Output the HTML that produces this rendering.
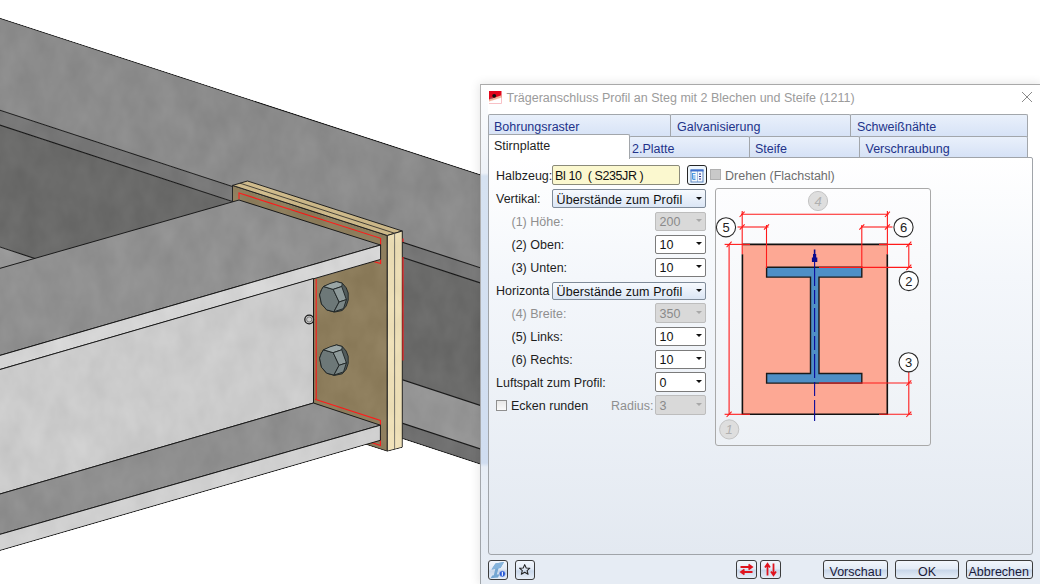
<!DOCTYPE html>
<html><head><meta charset="utf-8">
<style>
html,body{margin:0;padding:0;width:1040px;height:584px;overflow:hidden;background:#fff;}
body{position:relative;font-family:"Liberation Sans",sans-serif;font-size:12px;color:#1e1e1e;}
.a{position:absolute;}
#scene{position:absolute;left:0;top:0;}
#dlg{position:absolute;left:480px;top:84px;width:560px;height:500px;background:linear-gradient(#fff 0px,#fff 70px,#e6ecf4 470px);border-left:1px solid rgba(0,0,0,0.3);border-top:1px solid #a9a9a9;box-sizing:border-box;box-shadow:0 0 9px 1px rgba(0,0,0,0.10);}
#ttl{position:absolute;left:0;top:0;width:560px;height:29px;background:#fff;}
.t{white-space:nowrap;line-height:14px;}
.tab{position:absolute;box-sizing:border-box;border:1px solid #a2a6ab;border-bottom:none;border-radius:2px 2px 0 0;background:linear-gradient(#e9f0fb,#d6e2f6);color:#22338a;font-size:12.5px;line-height:14px;white-space:nowrap;}
.tab span{position:absolute;top:4.5px;}
.lbl{position:absolute;white-space:nowrap;font-size:12.5px;line-height:14px;color:#1e1e1e;}
.dis{color:#8f8f8f;}
.cb{position:absolute;box-sizing:border-box;border:1px solid #7b7b7b;border-radius:2px;background:#fff;font-size:12.5px;line-height:14px;white-space:nowrap;color:#111;}
.cb span{position:absolute;left:3.5px;top:2.5px;}
.cb i{position:absolute;right:3.5px;top:6.5px;width:0;height:0;border-left:3.5px solid transparent;border-right:3.5px solid transparent;border-top:3.5px solid #111;}
.cb.dd{background:#d9d9d9;border-color:#bdbdbd;color:#8a8a8a;}
.cb.dd i{border-top-color:#a8a8a8;}
.cb.gr{background:linear-gradient(#f7fafe,#dbe6f5);border-color:#7f8b99;}
.btn{position:absolute;box-sizing:border-box;border:1px solid #3c3c3c;border-radius:3px;background:linear-gradient(#f2f6fc 0%,#e3ebf6 45%,#c9d7ea 55%,#e6eef8 100%);font-size:12.5px;line-height:14px;white-space:nowrap;color:#1a1a3a;text-align:center;overflow:hidden;}

</style></head><body>
<svg id="scene" width="481" height="584" viewBox="0 0 481 584">
<defs>
  <filter id="tex" x="-20" y="0" width="520" height="584" filterUnits="userSpaceOnUse" color-interpolation-filters="sRGB">
    <feTurbulence type="fractalNoise" baseFrequency="0.045 0.03" numOctaves="3" seed="7" result="n"/>
    <feColorMatrix in="n" type="matrix" values="1 0 0 0 0  1 0 0 0 0  1 0 0 0 0  0 0 0 0 1" result="g"/>
    <feComposite in="SourceGraphic" in2="g" operator="arithmetic" k1="0" k2="1" k3="0.07" k4="-0.035" result="c"/>
    <feComposite in="c" in2="SourceAlpha" operator="in"/>
  </filter>
</defs>
<g filter="url(#tex)">
  <!-- main beam top flange top surface -->
  <polygon points="-10,15 481,175.1 481,268 -10,107" fill="#8b8b8b"/>
  <!-- main top flange front face -->
  <polygon points="-10,107 481,268 481,283.2 -10,121.9" fill="#777777"/>
  <!-- main web -->
  <polygon points="-10,121.9 481,283.2 481,405.7 -10,243.7" fill="#6a6a69"/>
  <!-- main bottom flange top surface -->
  <polygon points="-10,243.7 481,405.7 481,449.2 -10,287.2" fill="#969696"/>
  <!-- main bottom flange front face -->
  <polygon points="-10,287.2 481,449.2 481,464.3 -10,302.7" fill="#707070"/>
  <g stroke="#1a1a1a" stroke-width="1.1" fill="none">
    <line x1="-10" y1="15" x2="481" y2="175.1"/>
    <line x1="-10" y1="107" x2="481" y2="268"/>
    <line x1="-10" y1="121.9" x2="481" y2="283.2"/>
    <line x1="-10" y1="243.7" x2="481" y2="405.7"/>
    <line x1="-10" y1="287.2" x2="481" y2="449.2"/>
    <line x1="-10" y1="302.7" x2="481" y2="464.3"/>
  </g>
  <!-- end plate front face -->
  <polygon points="232.5,185.4 387.3,235.5 387.3,451.2 232.5,401" fill="#8d7d5c" stroke="#222" stroke-width="1"/>
  <!-- plate top strips -->
  <polygon points="232.5,185.4 247.5,181 402.3,231 387.3,235.5" fill="#cdb98a" stroke="#222" stroke-width="1"/>
  <line x1="240" y1="183.2" x2="394.8" y2="233.3" stroke="#222" stroke-width="0.8"/>
  <!-- plate side strips -->
  <polygon points="387.3,235.5 402.3,231 402.3,447.3 387.3,451.2" fill="#ecdeb6" stroke="#222" stroke-width="1"/>
  <line x1="394.6" y1="233.3" x2="394.6" y2="449.3" stroke="#555" stroke-width="0.8"/>
  <!-- red outlines on plate -->
  <g stroke="#ff1a1a" stroke-width="1.1" fill="none">
    <polyline points="239,199 239,193 380.6,238.3 380.6,245"/>
    <polyline points="380.6,259 380.6,263.5 372,261"/>
    <line x1="316.2" y1="279" x2="316.2" y2="399.5"/>
    <polyline points="315,399.2 380.4,420.4 380.4,425"/>
    <polyline points="380.4,436 380.4,445.4 367,441"/>
    <line x1="403" y1="238.5" x2="403" y2="242"/>
    <line x1="403" y1="257" x2="403" y2="360.6"/>
  </g>
  <!-- secondary top flange top surface -->
  <polygon points="239,200 380.6,245 -10,358.3 -10,271.2" fill="#909090" stroke="#1a1a1a" stroke-width="1"/>
  <!-- secondary top flange front face -->
  <polygon points="380.6,245 380.6,259.4 -10,372.4 -10,358.3" fill="#d5d5d5" stroke="#1a1a1a" stroke-width="1"/>
  <!-- secondary web -->
  <polygon points="-10,372.4 313.5,278.5 313.5,403 -10,496.9" fill="#cbcbcb" stroke="#1a1a1a" stroke-width="1"/>
  <!-- secondary bottom flange top surface -->
  <polygon points="313.5,403 380.4,425.2 -10,537.2 -10,496.9" fill="#8f8f8f" stroke="#1a1a1a" stroke-width="1"/>
  <!-- secondary bottom flange front face -->
  <polygon points="380.4,425.2 380.4,440.3 -10,553.4 -10,537.2" fill="#d0d0d0" stroke="#1a1a1a" stroke-width="1"/>
  </g>
  <!-- bolts -->
  <g id="bolt" stroke="#1e2424" stroke-width="0.9" stroke-linejoin="round">
    <polygon points="323.5,286.5 336.5,281.6 342.3,283.2 346.2,287.8 348.2,293 348.2,300.1 346.2,306 342.3,310.5 334.5,312.1 326.7,309.9 321.5,304 319.6,294.9 321.5,289.7" fill="#525c5c"/>
    <polygon points="323.5,286.5 333.2,289.4 339.1,302 333.9,311.8 326.7,309.9 321.5,304 319.6,294.9 321.5,289.7" fill="#6d7878"/>
    <polygon points="323.5,286.5 330,283.5 336.5,281.6 342.3,283.2 341.7,286.5 333.2,289.4" fill="#9aa6a6"/>
    <polygon points="333.2,289.4 341.7,286.5 346.4,299.6 339.1,302" fill="#8e9a9a"/>
    <polygon points="339.1,302 346.4,299.6 343.5,308.6 333.9,311.8" fill="#7a8686"/>
  </g>
  <use href="#bolt" transform="translate(0,63.3)"/>
  <circle cx="309.2" cy="319.5" r="4.4" fill="none" stroke="#1a1a1a" stroke-width="1.3"/>
  <circle cx="309.2" cy="319.5" r="2.6" fill="none" stroke="#555" stroke-width="0.7"/>
</svg>

<div id="dlg"></div>
<div class="a" style="left:481px;top:85px;width:559px;height:30px;background:#fff;"></div>
<div class="a" style="left:481px;top:85px;width:7px;height:499px;background:linear-gradient(#ffffff 0px,#f8fafc 30px,#eef2f8 88px,#d6e2f1 91px,#d0ddf0 378px,#e8eef6 382px,#e6ecf4 499px);"></div>
<!-- title icon -->
<svg class="a" style="left:489px;top:91px" width="13" height="13" viewBox="0 0 13 13">
  <rect x="0" y="0" width="12.5" height="12.5" fill="#e2071c"/>
  <polygon points="0,8.5 12.5,4.2 12.5,7 0,11" fill="#f2b49a"/>
  <polygon points="0,10.6 12.5,6.4 12.5,12.5 0,12.5" fill="#fff"/>
  <line x1="1.2" y1="7.2" x2="4" y2="7" stroke="#888" stroke-width="0.8"/>
  <circle cx="5.2" cy="4.8" r="1.9" fill="#111"/>
</svg>
<div class="a t" style="left:506.5px;top:91px;color:#9b9b9b;font-size:12.5px;">Trägeranschluss Profil an Steg mit 2 Blechen und Steife (1211)</div>
<svg class="a" style="left:1021px;top:91px" width="12" height="12" viewBox="0 0 12 12"><path d="M1,1 L11,11 M11,1 L1,11" stroke="#8a8a8a" stroke-width="1"/></svg>

<!-- panel -->
<div class="a" style="left:488px;top:157px;width:545px;height:398px;box-sizing:border-box;border:1px solid #a0a4a9;border-radius:0 2px 3px 3px;background:linear-gradient(#fff 0%,#f4f7fb 30%,#e3e9f1 100%);"></div>
<!-- tabs row 1 -->
<div class="tab" style="left:488px;top:114px;width:183px;height:23px;"><span style="left:5px">Bohrungsraster</span></div>
<div class="tab" style="left:670px;top:114px;width:181px;height:23px;"><span style="left:6px">Galvanisierung</span></div>
<div class="tab" style="left:850px;top:114px;width:178px;height:23px;"><span style="left:6px">Schweißnähte</span></div>
<!-- tabs row 2 -->
<div class="tab" style="left:629px;top:136px;width:121px;height:21px;"><span style="left:2px;top:5px">2.Platte</span></div>
<div class="tab" style="left:749px;top:136px;width:111px;height:21px;"><span style="left:5px;top:5px">Steife</span></div>
<div class="tab" style="left:859px;top:136px;width:169px;height:21px;"><span style="left:5.5px;top:5px">Verschraubung</span></div>
<div class="tab" style="left:488px;top:134px;width:142px;height:25px;background:#fff;color:#1e1e1e;border-color:#a2a6ab;"><span style="left:5px;top:4px">Stirnplatte</span></div>

<!-- controls -->
<div class="lbl" style="left:496px;top:169px;">Halbzeug:</div>
<div class="a" style="left:552px;top:165px;width:128px;height:20px;box-sizing:border-box;border:1px solid #8a8a7a;border-radius:2px;background:#fbf8cf;"></div>
<div class="lbl" style="left:555px;top:169px;color:#111;letter-spacing:-0.4px">Bl 10&nbsp; ( S235JR )</div>
<div class="a" style="left:687px;top:165px;width:19.5px;height:19.5px;box-sizing:border-box;border:1.5px solid #252525;border-radius:3px;background:#eef6fd;"></div>
<svg class="a" style="left:690px;top:168.5px" width="14" height="14" viewBox="0 0 14 14">
  <rect x="0.5" y="0.5" width="13" height="13" fill="#5d86c0"/>
  <rect x="0.5" y="0.5" width="13" height="2" fill="#3f6fd0"/>
  <rect x="1.5" y="2.5" width="5.5" height="10" fill="#f4f8fd"/>
  <rect x="7.5" y="2.5" width="5" height="10" fill="#f4f8fd"/>
  <path d="M2.5,4 V10.5 M2.5,4.5 H5.5 M3,7 H5.5 M3,9 H5.5 M3,10.5 H5.5" stroke="#3a8ee0" stroke-width="0.9"/>
  <path d="M9,5 H11 M9,7.5 H11 M9,10 H11" stroke="#2a2a8a" stroke-width="1.1"/>
</svg>
<div class="a" style="left:710px;top:169px;width:11px;height:11px;box-sizing:border-box;border:1px solid #b0b0b0;background:#c9c9c9;"></div>
<div class="lbl dis" style="left:725px;top:169px;color:#6e6e6e">Drehen (Flachstahl)</div>

<div class="lbl" style="left:496px;top:192px;">Vertikal:</div>
<div class="cb gr" style="left:552px;top:189px;width:154px;height:19px;"><span style="letter-spacing:0.1px">Überstände zum Profil</span><i></i></div>
<div class="lbl dis" style="left:511.5px;top:215px;">(1) Höhe:</div>
<div class="cb dd" style="left:655px;top:211.7px;width:51.3px;height:19.3px;"><span>200</span><i></i></div>
<div class="lbl" style="left:511.5px;top:238px;">(2) Oben:</div>
<div class="cb" style="left:655px;top:234.7px;width:51.3px;height:19.8px;"><span>10</span><i></i></div>
<div class="lbl" style="left:511.5px;top:261px;">(3) Unten:</div>
<div class="cb" style="left:655px;top:257.7px;width:51.3px;height:19.8px;"><span>10</span><i></i></div>
<div class="lbl" style="left:496px;top:284px;width:54px;overflow:hidden;">Horizontal:</div>
<div class="cb gr" style="left:552px;top:281.5px;width:154px;height:18.5px;"><span style="letter-spacing:0.1px">Überstände zum Profil</span><i></i></div>
<div class="lbl dis" style="left:511.5px;top:307px;">(4) Breite:</div>
<div class="cb dd" style="left:655px;top:303.2px;width:51.3px;height:19.8px;"><span>350</span><i></i></div>
<div class="lbl" style="left:511.5px;top:330px;">(5) Links:</div>
<div class="cb" style="left:655px;top:326.7px;width:51.3px;height:19.8px;"><span>10</span><i></i></div>
<div class="lbl" style="left:511.5px;top:353px;">(6) Rechts:</div>
<div class="cb" style="left:655px;top:349.7px;width:51.3px;height:19.3px;"><span>10</span><i></i></div>
<div class="lbl" style="left:496px;top:376px;">Luftspalt zum Profil:</div>
<div class="cb" style="left:655px;top:372.2px;width:51.3px;height:19.8px;"><span>0</span><i></i></div>
<div class="a" style="left:496px;top:400px;width:11px;height:11px;box-sizing:border-box;border:1px solid #8f8f8f;background:linear-gradient(#e8e8e8,#fafafa);"></div>
<div class="lbl" style="left:511px;top:399px;">Ecken runden</div>
<div class="lbl dis" style="left:611px;top:399px;">Radius:</div>
<div class="cb dd" style="left:655px;top:395.2px;width:51.3px;height:19.8px;"><span>3</span><i></i></div>

<!-- bottom buttons -->
<div class="btn" style="left:488px;top:560px;width:20px;height:19.5px;"></div>
<svg class="a" style="left:488px;top:560px" width="20" height="20" viewBox="488 560 20 20">
  <path d="M491.5,569.5 L495.5,563.5 L504,562 L500.5,568 L498.5,568.3 L496.8,574.5 L499.5,574.2 L498,577.5 L490.5,578.2 L492.3,575.5 L493.8,575.2 L495.3,569 Z" fill="#74a6d2"/>
  <path d="M495.5,563.5 L504,562 L500.5,568 L491.5,569.5 Z" fill="#86b4dc"/>
  <circle cx="502.3" cy="573.8" r="3.1" fill="#2457d6" stroke="#c9d3e6" stroke-width="0.6"/>
  <rect x="501.8" y="571.8" width="1.1" height="4" fill="#fff"/>
</svg>
<div class="btn" style="left:515px;top:560px;width:20px;height:19.5px;"></div>
<svg class="a" style="left:518px;top:563px" width="14" height="14" viewBox="0 0 14 14">
  <path d="M6.7,1.6 L8.2,5 L11.9,5.2 L9.1,7.6 L10.1,11.3 L6.7,9.3 L3.3,11.3 L4.3,7.6 L1.5,5.2 L5.2,5 Z" fill="none" stroke="#222" stroke-width="1.05" stroke-linejoin="round"/>
</svg>
<div class="btn" style="left:736px;top:560px;width:20.5px;height:19px;"></div>
<svg class="a" style="left:739px;top:563px" width="15" height="13" viewBox="0 0 15 13">
  <path d="M1.5,4 H12.5 M9.5,1.5 L13,4 L9.5,6.5 M13.5,9 H2.5 M5.5,6.5 L2,9 L5.5,11.5" fill="none" stroke="#e0141e" stroke-width="1.8"/>
</svg>
<div class="btn" style="left:760px;top:560px;width:20.5px;height:19px;"></div>
<svg class="a" style="left:763px;top:562px" width="15" height="15" viewBox="0 0 15 15">
  <path d="M4.5,13.5 V2.5 M2,5.5 L4.5,1.8 L7,5.5 M10.5,1.5 V12.5 M8,9.5 L10.5,13.2 L13,9.5" fill="none" stroke="#e0141e" stroke-width="1.8"/>
</svg>
<div class="btn" style="left:823px;top:560px;width:65px;height:19px;"><span style="position:absolute;left:5.5px;top:3.5px">Vorschau</span></div>
<div class="btn" style="left:895px;top:560px;width:64px;height:19px;"><span style="position:absolute;left:0;right:0;top:3.5px">OK</span></div>
<div class="btn" style="left:966px;top:560px;width:67px;height:19px;"><span style="position:absolute;left:1.5px;top:3.5px">Abbrechen</span></div>

<!-- diagram frame -->
<div class="a" style="left:715px;top:188px;width:216px;height:258px;box-sizing:border-box;border:1px solid #a9a9a9;border-radius:3px;background:linear-gradient(#fdfdfe,#edf1f6);"></div>

<!-- diagram -->
<svg class="a" style="left:715px;top:188px" width="216" height="257" viewBox="715 188 216 257">
  <!-- plate -->
  <rect x="742.4" y="244.4" width="144.9" height="169.9" fill="#fda894"/>
  <g stroke="#111" stroke-width="1.6" fill="none">
    <polyline points="742.4,244.4 887.3,244.4"/>
    <polyline points="742.4,254.3 742.4,414.3 887.3,414.3 887.3,254.3"/>
    
    
  </g>
  <!-- I beam -->
  <path d="M766.6,267.3 H861.8 V277.1 H819 V373.5 H861.8 V383.1 H766.6 V373.5 H810.5 V277.1 H766.6 Z" fill="#4f8fc6" stroke="#1a1a1a" stroke-width="1.4"/>
  <!-- center line -->
  <line x1="814.6" y1="262" x2="814.6" y2="421" stroke="#0a0a9c" stroke-width="1.1" stroke-dasharray="24,4,14,4"/>
  <path d="M813.8,249.5 H815.4 V254 H816.2 V257.5 H817.3 V262 H811.9 V257.5 H813 V254 H813.8 Z" fill="#0a0a8c"/>
  <!-- red dimension lines -->
  <g stroke="#ff1a1a" stroke-width="1.1" fill="none">
    <line x1="741" y1="214.3" x2="888.5" y2="214.3"/>
    <line x1="742.2" y1="211" x2="742.2" y2="254.3"/>
    <line x1="887.4" y1="211" x2="887.4" y2="254.3"/>
    <line x1="737.5" y1="227" x2="768.5" y2="227"/>
    <line x1="861" y1="227" x2="892.5" y2="227"/>
    <line x1="766.5" y1="225" x2="766.5" y2="268"/>
    <line x1="861.8" y1="225" x2="861.8" y2="268"/>
    <line x1="724.6" y1="244.4" x2="750" y2="244.4"/>
    <line x1="879" y1="244.4" x2="912" y2="244.4"/>
    <line x1="729.1" y1="244.4" x2="729.1" y2="414.3"/>
    <line x1="724.6" y1="414.3" x2="750" y2="414.3"/>
    <line x1="879" y1="414.3" x2="912" y2="414.3"/>
    <line x1="819" y1="267.4" x2="912" y2="267.4"/>
    <line x1="819" y1="383" x2="912" y2="383"/>
    <line x1="908.8" y1="244.4" x2="908.8" y2="267.4"/>
    <line x1="908.8" y1="372" x2="908.8" y2="414.3"/>
    <!-- ticks -->
    <path d="M739.6,217 L744.6,211.6 M739.7,229.7 L744.7,224.3 M764,229.7 L769,224.3 M859.3,229.7 L864.3,224.3 M884.9,229.7 L889.9,224.3 M884.9,217 L889.9,211.6 M726.6,247.1 L731.6,241.7 M726.6,417 L731.6,411.6 M906.3,247.1 L911.3,241.7 M906.3,270.1 L911.3,264.7 M906.3,385.7 L911.3,380.3 M906.3,417 L911.3,411.6"/>
  </g>
  <!-- circles -->
  <g font-family="Liberation Sans" font-size="13" text-anchor="middle">
    <circle cx="818" cy="201" r="9.6" fill="#dedede" stroke="#c4c4c4" stroke-width="1"/>
    <text x="818" y="205.8" fill="#b0b0b0" font-style="italic">4</text>
    <circle cx="726" cy="227.3" r="9.6" fill="#fff" stroke="#2a2a2a" stroke-width="1.1"/>
    <text x="726" y="232" fill="#222">5</text>
    <circle cx="903.5" cy="227.3" r="9.6" fill="#fff" stroke="#2a2a2a" stroke-width="1.1"/>
    <text x="903.5" y="232" fill="#222">6</text>
    <circle cx="908.8" cy="281" r="9.6" fill="#fff" stroke="#2a2a2a" stroke-width="1.1"/>
    <text x="908.8" y="285.7" fill="#222">2</text>
    <circle cx="908.6" cy="362.3" r="9.6" fill="#fff" stroke="#2a2a2a" stroke-width="1.1"/>
    <text x="908.6" y="367" fill="#222">3</text>
    <circle cx="729.2" cy="429.4" r="9.6" fill="#dedede" stroke="#c4c4c4" stroke-width="1"/>
    <text x="729.2" y="434.2" fill="#b0b0b0" font-style="italic">1</text>
  </g>
</svg>
</body></html>
